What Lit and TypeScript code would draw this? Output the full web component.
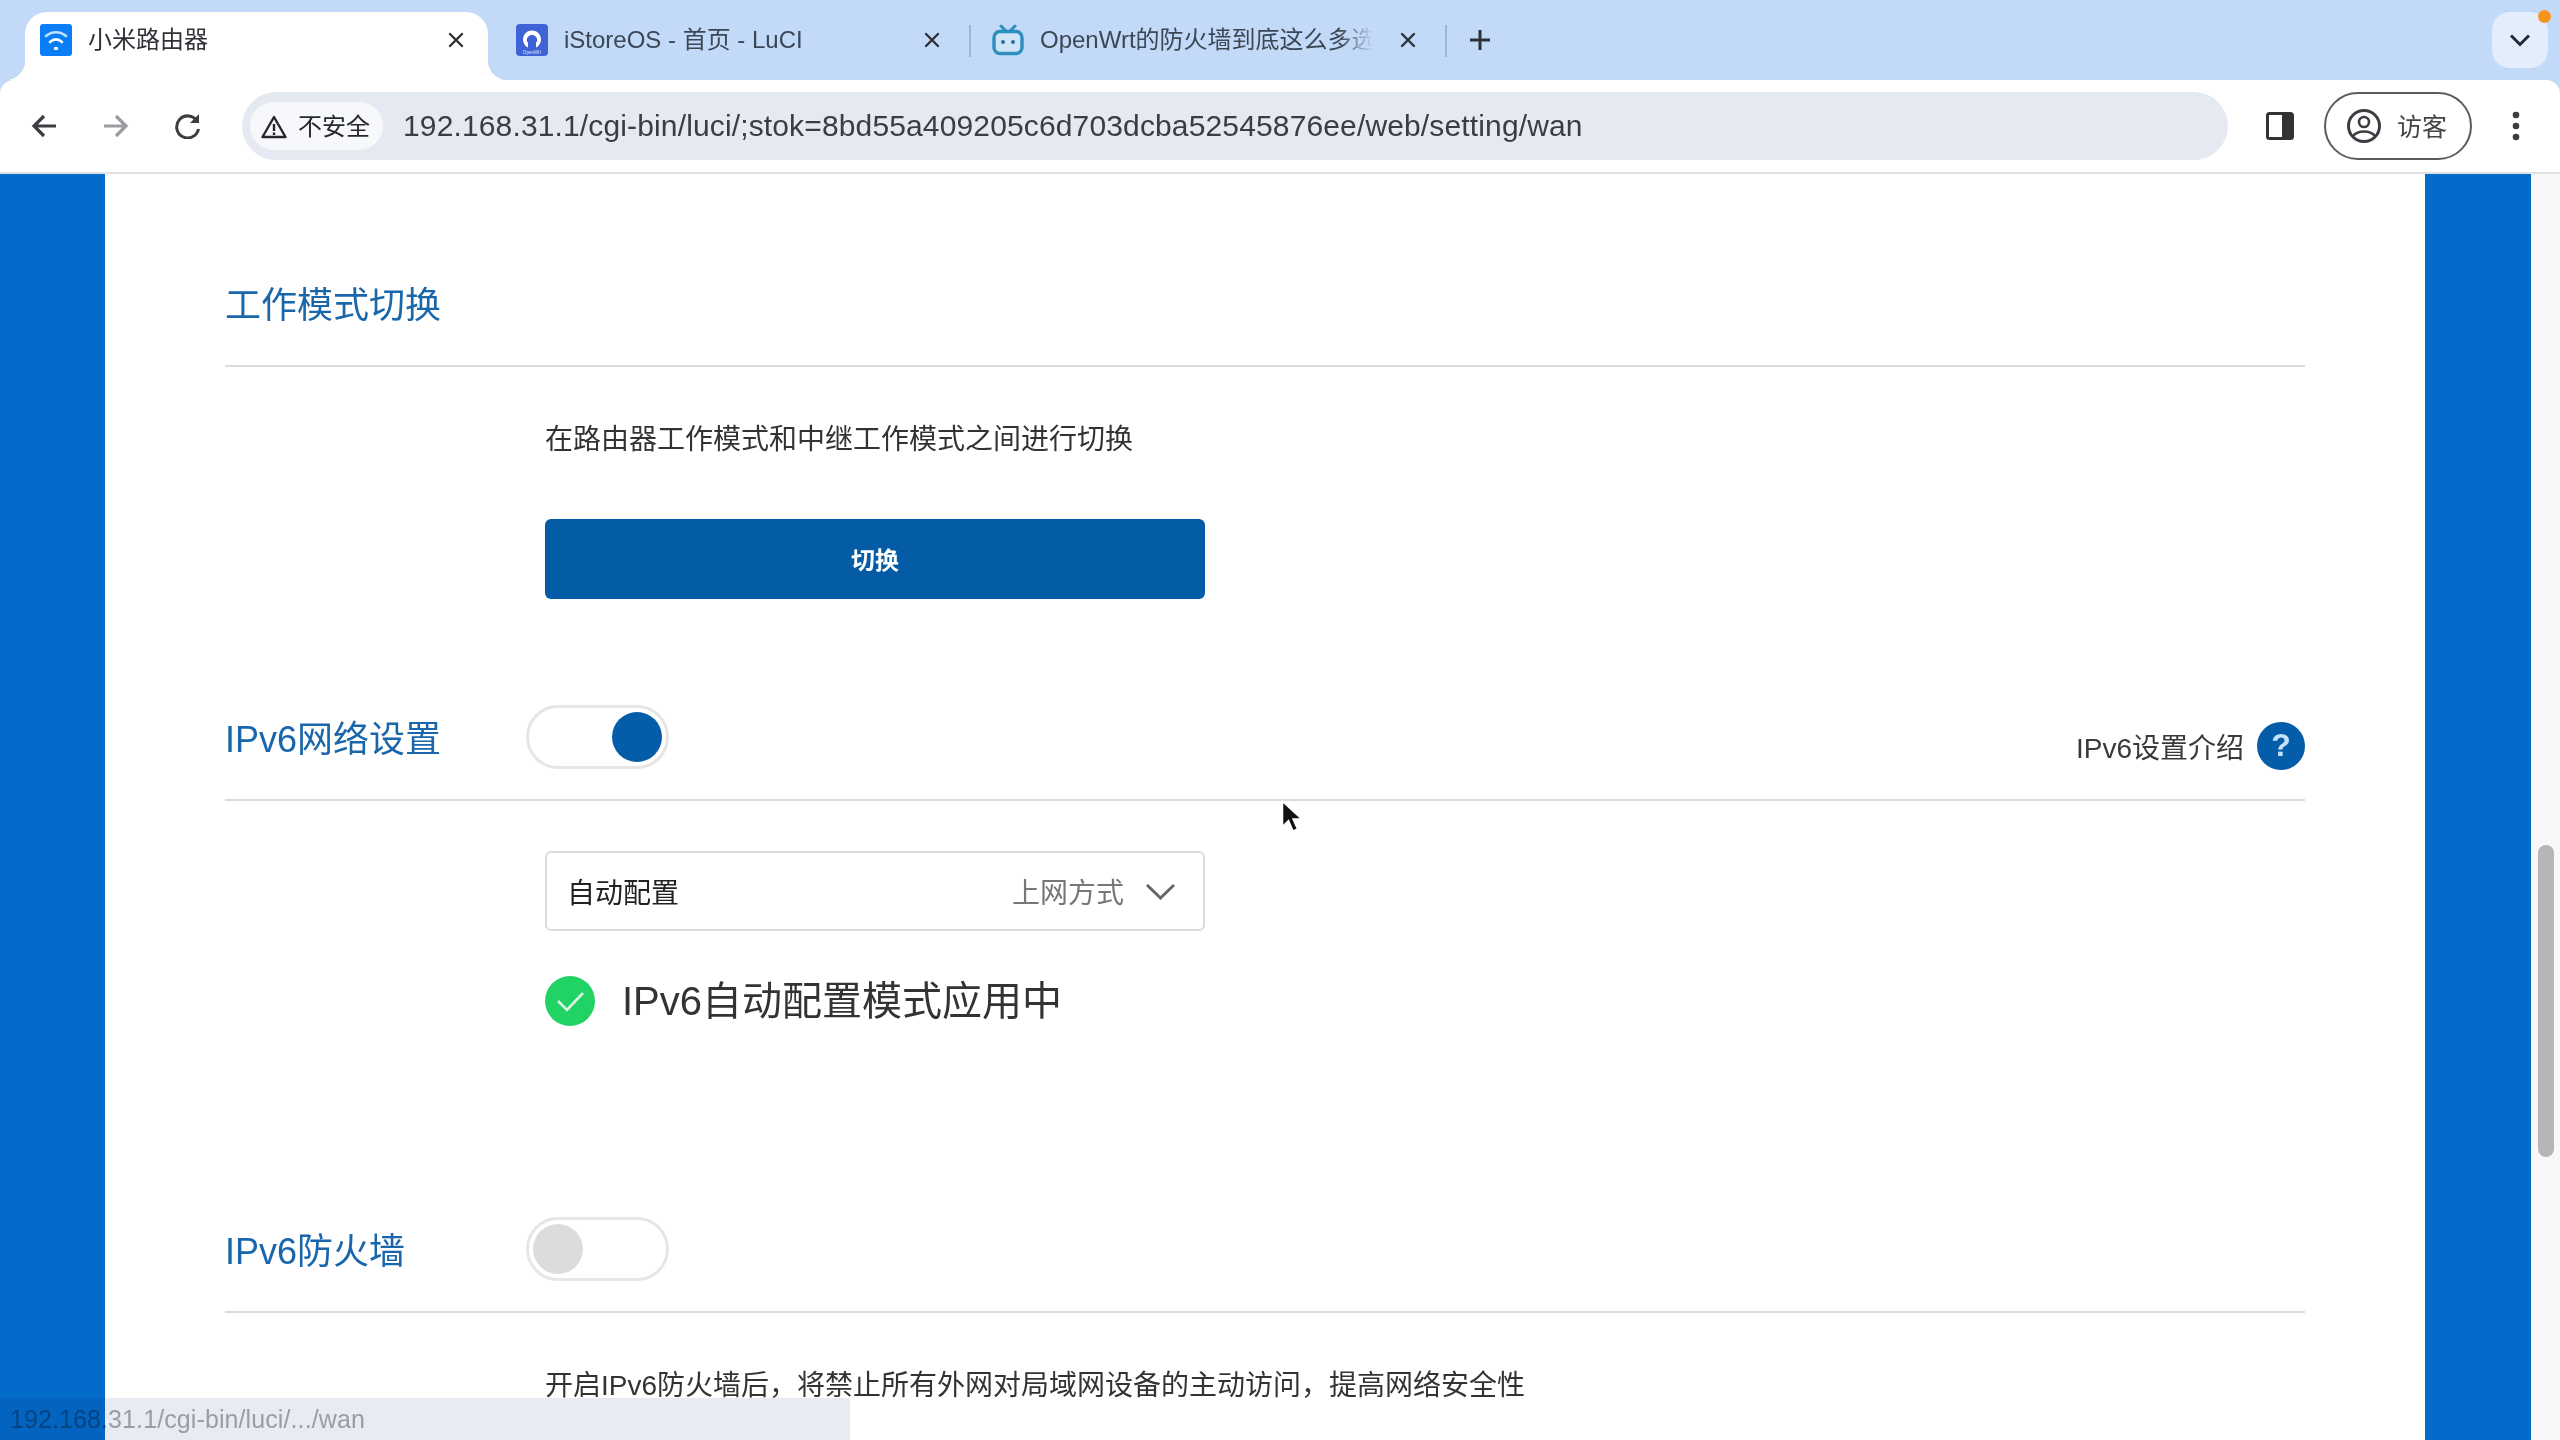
import { LitElement, html, css, svg } from "lit"
import { customElement } from "lit/decorators.js"

const closeIcon = svg`<path d="M2 2l12 12M14 2L2 14" stroke="#2f3237" stroke-width="2.4" fill="none" stroke-linecap="round" />`

const wifiIcon = html`<svg class="favicon" viewBox="0 0 32 32">
  <rect width="32" height="32" rx="3" fill="#0b7df5" />
  <path d="M6 12c6-5 14-5 20 0" stroke="#bfe0ff" stroke-width="2.6" fill="none" stroke-linecap="round" />
  <path d="M10 18c4-3.4 8-3.4 12 0" stroke="#fff" stroke-width="2.6" fill="none" stroke-linecap="round" />
  <rect x="14" y="23" width="4" height="3" rx="1" fill="#fff" />
</svg>`

const openwrtIcon = html`<svg class="favicon" viewBox="0 0 32 32">
  <rect width="32" height="32" rx="4" fill="#3f62d6" />
  <path d="M12 23.5a9 9 0 1 1 8 0v-4.6a5 5 0 1 0-8 0z" fill="#fff" />
  <text x="16" y="30.4" font-size="4.6" fill="#dbe4ff" text-anchor="middle" font-family="Liberation Sans">OpenWrt</text>
</svg>`

const biliIcon = html`<svg class="favicon" viewBox="0 0 32 32">
  <path d="M9 2l5 5M23 2l-5 5" stroke="#2c8fbe" stroke-width="3" stroke-linecap="round" />
  <rect x="2" y="7.5" width="28" height="22" rx="6" fill="#cfe4f7" stroke="#2c8fbe" stroke-width="3.4" />
  <circle cx="11" cy="18" r="2" fill="#2b6f92" />
  <circle cx="21" cy="18" r="2" fill="#2b6f92" />
</svg>`

@customElement("app-root")
export class AppRoot extends LitElement {
  static styles = css`
    :host {
      display: block;
      font-family: "Liberation Sans", "Noto Sans CJK SC", sans-serif;
    }

    .window {
      position: relative;
      display: flex;
      flex-direction: column;
      width: 2560px;
      height: 1440px;
      overflow: hidden;
      background: #c2daf8;
    }

    /* tab strip */
    .tabstrip {
      display: flex;
      align-items: flex-start;
      height: 80px;
      padding: 12px 12px 0 25px;
      box-sizing: border-box;
      flex: none;
    }

    .tab {
      position: relative;
      display: flex;
      align-items: center;
      width: 476px;
      height: 68px;
      padding: 0 0 12px 15px;
      box-sizing: border-box;
      font-size: 24px;
      color: #3c4654;
      flex: none;
    }

    .tab > * {
      position: relative;
    }

    .tab.active {
      color: #2f3237;
    }

    .tab.active::before {
      content: "";
      position: absolute;
      left: 0;
      right: 13px;
      top: 0;
      bottom: 0;
      background: #fff;
      border-radius: 22px 22px 0 0;
    }

    .tab.active::after {
      content: "";
      position: absolute;
      left: -20px;
      right: -7px;
      bottom: 0;
      height: 20px;
      background:
        radial-gradient(circle at 0 0, transparent 20px, #fff 20.5px) left bottom / 20px 20px no-repeat,
        radial-gradient(circle at 100% 0, transparent 20px, #fff 20.5px) right bottom / 20px 20px no-repeat;
    }

    .tab.sep::before {
      content: "";
      position: absolute;
      right: 6px;
      top: 13px;
      width: 2px;
      height: 32px;
      background: #9db6d6;
    }

    .favicon {
      width: 32px;
      height: 32px;
      flex: none;
    }

    .tab-title {
      width: 340px;
      margin: 0 0 5px 16px;
      white-space: nowrap;
      flex: none;
    }

    .tab-title.fade {
      -webkit-mask-image: linear-gradient(90deg, #000 88%, transparent 98%);
      mask-image: linear-gradient(90deg, #000 88%, transparent 98%);
    }

    .tab-close {
      width: 16px;
      height: 16px;
      margin-left: 20px;
      flex: none;
    }

    .new-tab {
      width: 24px;
      height: 24px;
      margin: 16px 0 0 15px;
      flex: none;
    }

    .tab-search {
      position: relative;
      display: flex;
      align-items: center;
      justify-content: center;
      width: 56px;
      height: 56px;
      margin-left: auto;
      border-radius: 18px;
      background: #e3edfb;
      flex: none;
    }

    .tab-search svg {
      width: 24px;
      height: 14px;
    }

    .tab-search::after {
      content: "";
      position: absolute;
      right: -3px;
      top: -2px;
      width: 13px;
      height: 13px;
      border-radius: 50%;
      background: #f7941e;
    }

    /* toolbar */
    .toolbar {
      display: flex;
      align-items: center;
      height: 94px;
      padding: 0 20px;
      box-sizing: border-box;
      background: #fff;
      border-bottom: 2px solid #dfe1e5;
      border-radius: 14px 14px 0 0;
      flex: none;
    }

    .tool {
      display: flex;
      align-items: center;
      justify-content: center;
      width: 48px;
      height: 48px;
      flex: none;
    }

    .tool + .tool {
      margin-left: 24px;
    }

    .omnibox {
      display: flex;
      align-items: center;
      flex: 1;
      height: 68px;
      margin: 0 28px 0 30px;
      padding-left: 8px;
      box-sizing: border-box;
      border-radius: 34px;
      background: #e5e9f2;
    }

    .chip {
      display: flex;
      align-items: center;
      gap: 10px;
      width: 133px;
      height: 48px;
      padding-left: 10px;
      box-sizing: border-box;
      border-radius: 24px;
      background: #f7f8fb;
      font-size: 24px;
      color: #26282c;
    }

    .chip span {
      margin-bottom: 3px;
    }

    .url {
      margin-left: 20px;
      font-size: 30px;
      letter-spacing: 0.14px;
      color: #3a3d42;
      white-space: nowrap;
    }

    .profile {
      display: flex;
      align-items: center;
      width: 148px;
      height: 68px;
      margin: 0 20px;
      padding-left: 21px;
      box-sizing: border-box;
      border: 2px solid #5a5c60;
      border-radius: 34px;
      font-size: 25px;
      color: #444;
      gap: 16px;
      flex: none;
    }

    .profile span {
      margin-bottom: 3px;
    }

    /* page */
    .viewport {
      display: flex;
      flex: 1;
      min-height: 0;
      background: #036ccb;
    }

    .content {
      width: 2320px;
      margin-left: 105px;
      padding: 69px 120px 0;
      box-sizing: border-box;
      background: #fff;
      flex: none;
    }

    .head {
      display: flex;
      align-items: center;
      height: 124px;
      box-sizing: border-box;
      border-bottom: 2px solid #dcdcdc;
    }

    .head.second {
      margin-top: 78px;
    }

    .head.third {
      margin-top: 156px;
    }

    .title {
      width: 301px;
      margin-bottom: 5px;
      font-size: 36px;
      color: #1a66ab;
      flex: none;
    }

    .toggle {
      display: flex;
      align-items: center;
      width: 143px;
      height: 64px;
      margin-top: -3px;
      padding: 0 4px;
      box-sizing: border-box;
      border: 3px solid #e6e6e6;
      border-radius: 32px;
      background: #fff;
    }

    .toggle.on {
      justify-content: flex-end;
    }

    .knob {
      width: 50px;
      height: 50px;
      border-radius: 50%;
      background: #dcdcdc;
    }

    .toggle.on .knob {
      background: #055ca8;
    }

    .intro {
      display: flex;
      align-items: center;
      gap: 13px;
      margin: 15px 0 0 auto;
      font-size: 28px;
      color: #3a3a3a;
    }

    .help {
      display: flex;
      align-items: center;
      justify-content: center;
      width: 48px;
      height: 48px;
      border-radius: 50%;
      background: #055ca8;
      color: #c5e2fb;
      font-size: 32px;
      font-weight: 700;
    }

    .body {
      padding: 53px 0 0 320px;
    }

    .body.tight {
      padding-top: 50px;
    }

    .desc {
      font-size: 28px;
      line-height: 40px;
      color: #333;
      white-space: nowrap;
    }

    .primary {
      display: flex;
      align-items: center;
      justify-content: center;
      width: 660px;
      height: 80px;
      margin-top: 59px;
      padding-bottom: 2px;
      box-sizing: border-box;
      border-radius: 6px;
      background: #045ba6;
      color: #fff;
      font-size: 24px;
      font-weight: 700;
    }

    .select {
      display: flex;
      align-items: center;
      width: 660px;
      height: 80px;
      padding: 0 27px 0 20px;
      box-sizing: border-box;
      border: 2px solid #dcdcdc;
      border-radius: 6px;
      font-size: 28px;
      color: #222;
    }

    .select-label {
      margin-left: auto;
      color: #777;
    }

    .select svg {
      width: 31px;
      height: 17px;
      margin-left: 21px;
    }

    .status {
      display: flex;
      align-items: center;
      gap: 27px;
      margin-top: 38px;
      font-size: 40px;
      color: #333;
    }

    .status svg {
      width: 50px;
      height: 50px;
    }

    .status span {
      margin-bottom: 6px;
    }

    .scrollbar {
      width: 29px;
      margin-left: 106px;
      padding: 671px 0 0 7px;
      box-sizing: border-box;
      background: #f8f8f8;
      flex: none;
    }

    .thumb {
      width: 16px;
      height: 312px;
      border-radius: 8px;
      background: #b5b6b5;
    }

    /* overlays */
    .link-status {
      position: absolute;
      left: 0;
      bottom: 0;
      width: 850px;
      height: 42px;
      padding-left: 10px;
      box-sizing: border-box;
      background: #e8ebf2;
      mix-blend-mode: multiply;
      font-size: 25px;
      letter-spacing: 0.1px;
      line-height: 42px;
      color: #9a9da3;
    }

    .cursor {
      position: absolute;
      left: 1281px;
      top: 800px;
      width: 20px;
      height: 34px;
    }
  `

  render() {
    return html`
      <div class="window">
        ${this.renderTabs()} ${this.renderToolbar()}
        <div class="viewport">
          <div class="content">
            <div class="head">
              <div class="title">工作模式切换</div>
            </div>
            <div class="body">
              <div class="desc">在路由器工作模式和中继工作模式之间进行切换</div>
              <div class="primary">切换</div>
            </div>

            <div class="head second">
              <div class="title">IPv6网络设置</div>
              <div class="toggle on"><div class="knob"></div></div>
              <div class="intro">IPv6设置介绍<span class="help">?</span></div>
            </div>
            <div class="body tight">
              <div class="select">
                自动配置
                <span class="select-label">上网方式</span>
                <svg viewBox="0 0 31 17">
                  <path d="M2 2l13.500 13L29 2" stroke="#666" stroke-width="3" fill="none" />
                </svg>
              </div>
              <div class="status">
                <svg viewBox="0 0 50 50">
                  <circle cx="25" cy="25" r="25" fill="#21d265" />
                  <path d="M13 25l9 9 16-17" stroke="#d9f7e4" stroke-width="2.600" fill="none" />
                </svg>
                <span>IPv6自动配置模式应用中</span>
              </div>
            </div>

            <div class="head third">
              <div class="title">IPv6防火墙</div>
              <div class="toggle"><div class="knob"></div></div>
            </div>
            <div class="body">
              <div class="desc">开启IPv6防火墙后，将禁止所有外网对局域网设备的主动访问，提高网络安全性</div>
            </div>
          </div>
          <div class="scrollbar"><div class="thumb"></div></div>
        </div>

        <div class="link-status">192.168.31.1/cgi-bin/luci/.../wan</div>
        <svg class="cursor" viewBox="0 0 20 34">
          <path d="M1.500 1.500v25l6-6 4.500 10.500 4.500-2-4.500-10h8.500z" fill="#111" stroke="#fff" stroke-width="1.500" />
        </svg>
      </div>
    `
  }

  renderTabs() {
    return html`
      <div class="tabstrip">
        <div class="tab active">
          ${wifiIcon}
          <span class="tab-title">小米路由器</span>
          <svg class="tab-close" viewBox="0 0 16 16">${closeIcon}</svg>
        </div>
        <div class="tab sep">
          ${openwrtIcon}
          <span class="tab-title">iStoreOS - 首页 - LuCI</span>
          <svg class="tab-close" viewBox="0 0 16 16">${closeIcon}</svg>
        </div>
        <div class="tab sep">
          ${biliIcon}
          <span class="tab-title fade">OpenWrt的防火墙到底这么多选</span>
          <svg class="tab-close" viewBox="0 0 16 16">${closeIcon}</svg>
        </div>
        <svg class="new-tab" viewBox="0 0 24 24">
          <path d="M12 2v20M2 12h20" stroke="#2f3237" stroke-width="3" fill="none" />
        </svg>
        <div class="tab-search">
          <svg viewBox="0 0 24 14">
            <path d="M3 2.500l9 9 9-9" stroke="#1f2937" stroke-width="3" fill="none" />
          </svg>
        </div>
      </div>
    `
  }

  renderToolbar() {
    return html`
      <div class="toolbar">
        <div class="tool">
          <svg width="26" height="24" viewBox="0 0 26 24">
            <path d="M25 12H4M13 2L3 12l10 10" stroke="#3a3d42" stroke-width="3.200" fill="none" />
          </svg>
        </div>
        <div class="tool">
          <svg width="26" height="24" viewBox="0 0 26 24">
            <path d="M1 12h21M13 2l10 10-10 10" stroke="#9a9ca0" stroke-width="3.200" fill="none" />
          </svg>
        </div>
        <div class="tool">
          <svg width="28" height="26" viewBox="0 0 28 26">
            <path d="M23 8a11 11 0 1 0 1.500 8" stroke="#3a3d42" stroke-width="3" fill="none" />
            <path d="M25 1v9h-9z" fill="#3a3d42" />
          </svg>
        </div>

        <div class="omnibox">
          <div class="chip">
            <svg width="28" height="25" viewBox="0 0 28 25">
              <path d="M14 3L2.500 23h23z" stroke="#26282c" stroke-width="2.400" fill="none" stroke-linejoin="round" />
              <path d="M14 10v7M14 18.500v2.500" stroke="#26282c" stroke-width="2.400" />
            </svg>
            <span>不安全</span>
          </div>
          <span class="url">192.168.31.1/cgi-bin/luci/;stok=8bd55a409205c6d703dcba52545876ee/web/setting/wan</span>
        </div>

        <div class="tool">
          <svg width="28" height="28" viewBox="0 0 28 28">
            <rect x="1.500" y="1.500" width="25" height="25" rx="2" fill="#fff" stroke="#333" stroke-width="3" />
            <rect x="16" y="1" width="11" height="26" fill="#333" />
          </svg>
        </div>
        <div class="profile">
          <svg width="34" height="34" viewBox="0 0 34 34">
            <circle cx="17" cy="17" r="15.500" stroke="#3a3d42" stroke-width="3" fill="none" />
            <circle cx="17" cy="13" r="5" stroke="#3a3d42" stroke-width="2.600" fill="none" />
            <path d="M6 27c5-6 17-6 22 0" stroke="#3a3d42" stroke-width="2.600" fill="none" />
          </svg>
          <span>访客</span>
        </div>
        <div class="tool">
          <svg width="8" height="30" viewBox="0 0 8 30">
            <circle cx="4" cy="4" r="3.300" fill="#3a3d42" />
            <circle cx="4" cy="15" r="3.300" fill="#3a3d42" />
            <circle cx="4" cy="26" r="3.300" fill="#3a3d42" />
          </svg>
        </div>
      </div>
    `
  }
}
